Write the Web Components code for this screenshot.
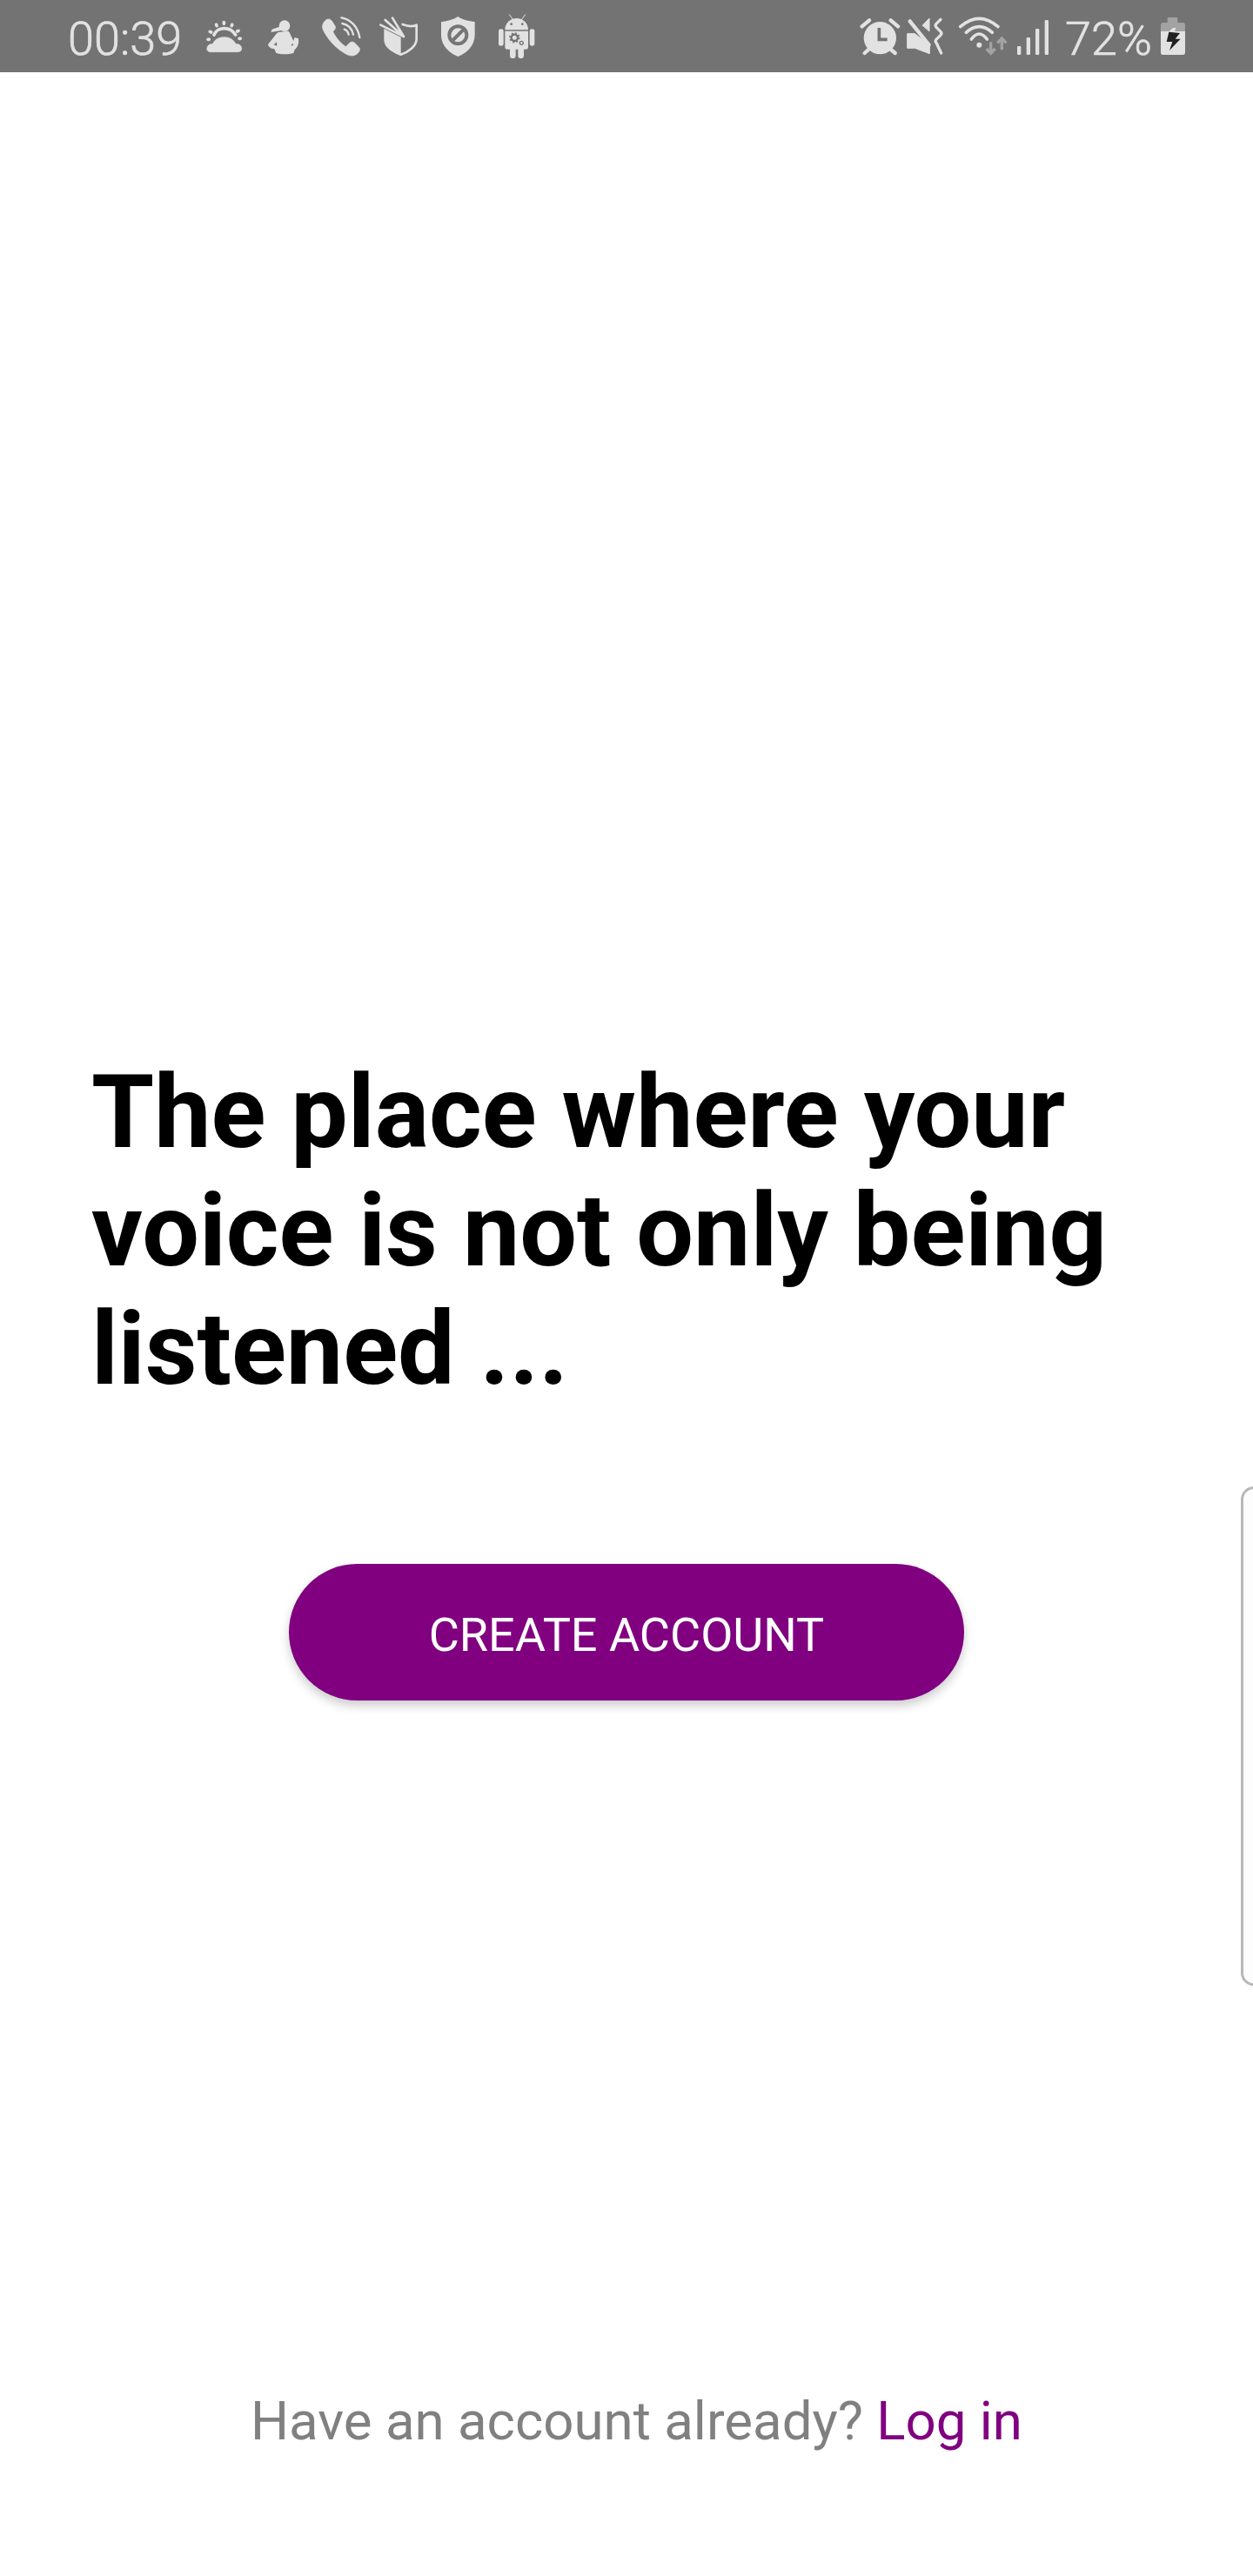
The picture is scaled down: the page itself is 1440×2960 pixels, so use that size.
<!DOCTYPE html>
<html><head><meta charset="utf-8"><title>Sign up</title>
<style>html,body{margin:0;background:#fff;height:100%}body{font-family:Roboto,sans-serif}</style></head>
<body>
<app-screen>
  <status-bar slot="status"></status-bar>
  <hero-title slot="title">The place where your voice is not only being listened ...</hero-title>
  <pill-button slot="action">CREATE ACCOUNT</pill-button>
  <login-prompt slot="footer"></login-prompt>
  <edge-handle slot="overlay"></edge-handle>
</app-screen>
<script>
const make=(name,html)=>customElements.define(name,class extends HTMLElement{
  constructor(){super();this.attachShadow({mode:'open'}).innerHTML=html;}
});
make('app-screen',`<style>
:host{display:flex;flex-direction:column;position:relative;width:1440px;height:2960px;overflow:hidden;background:#fff}
.title{padding:1127px 90px 0 105px}
.action{display:flex;justify-content:center;padding:179px 0 0 0}
.footer{margin-top:auto;padding:0 0 138px 23px}
</style>
<slot name="status"></slot>
<div class="title"><slot name="title"></slot></div>
<div class="action"><slot name="action"></slot></div>
<div class="footer"><slot name="footer"></slot></div>
<slot name="overlay"></slot>`);
const L='#e2e2e2',B='#737373',G='#a3a3a3';
const I=(x,y,w,h,body)=>`<svg style="left:${x}px;top:${y}px;width:${w}px;height:${h}px" viewBox="0 0 ${w*3} ${h*3}" fill="${L}" stroke-linecap="round" stroke-linejoin="round">${body}</svg>`;
make('status-bar',`<style>
:host{display:block;position:relative;height:83px;background:${B};color:${L};font-family:Roboto,sans-serif;font-weight:300;font-size:54px;flex:none;-webkit-text-stroke:.7px ${L}}
span{position:absolute;top:15px;line-height:59px}
svg{position:absolute;overflow:visible}
</style>
<span style="left:78px">00:39</span>
<span style="left:1224px">72%</span>
${I(237,24,42,36,`<path d="M14 107C4 107 0 98 4 90 7 82 14 79 22 80 28 64 44 56 62 56 82 56 96 66 102 80 112 78 122 85 122 96 122 104 116 107 108 107Z" stroke="${L}" stroke-width="2"/><path d="M27 48C34 32 48 26 62 26 78 26 92 34 101 48" fill="none" stroke="${L}" stroke-width="11"/><path d="M35 13l1 4M61 5v5M89 13l-1 4M13 37l4 2M111 34l-4 2M6 64h4M118 61h-4" fill="none" stroke="${L}" stroke-width="11"/>`)}
${I(308,23,35,39,`<circle cx="57" cy="20" r="19"/><path d="M48 20L14 32 10 42 46 36Z"/><path fill-rule="evenodd" d="M36 42L70 38C76 44 78 52 82 60L88 72 92 60 105 64C107 84 102 94 92 102L88 114C70 119 45 119 28 114L22 100C10 98 1 93 0 84L22 56C26 50 30 45 36 42ZM30 76L20 85 31 89ZM83 80L80 90 88 86Z"/>`)}
${I(370,19,44,46,`<path d="M14 12C22 6 30 8 36 18L46 34C48 40 44 46 38 52 46 70 62 90 82 104L94 92C100 86 106 86 112 90L126 104C134 112 130 120 122 128 112 136 100 138 84 130 50 112 20 80 4 46-2 32 4 20 14 12Z" stroke="${L}" stroke-width="2"/><path d="M67 4C100 10 124 36 130 72M70 24C90 28 104 42 108 62M77 44C85 47 90 53 92 62" fill="none" stroke="${L}" stroke-width="7"/>`)}
${I(436,18,44,45,`<path d="M80 30C95 36 115 38 128 32V80C128 105 100 125 74 134 50 125 22 110 20 85V45" fill="none" stroke="${L}" stroke-width="8"/><path d="M20 45L74 70V134C50 125 22 110 20 85Z"/><path d="M4 32L84 72M20 15L84 72M45 8L84 72" fill="none" stroke="${B}" stroke-width="13"/><path d="M4 32L84 72M20 15L84 72M45 8L84 72" fill="none" stroke="${L}" stroke-width="8"/>`)}
${I(507,19,39,46,`<path d="M58 0C75 12 95 16 116 18V62C116 100 90 125 58 138 26 125 0 100 0 62V18C20 16 40 12 58 0Z"/><circle cx="58" cy="64" r="30" fill="none" stroke="#767676" stroke-width="12"/><path d="M38 84L78 44" stroke="#767676" stroke-width="12"/>`)}
${I(573,16,41,51,`<path d="M22 55C22 32 40 15 62 15 84 15 102 32 102 55Z"/><path d="M37 2L50 20M92 2L79 20" stroke="${L}" stroke-width="3" fill="none"/><circle cx="44" cy="35" r="4" fill="${B}"/><circle cx="82" cy="35" r="4" fill="${B}"/><rect x="0" y="52" width="17" height="58" rx="8"/><rect x="107" y="52" width="17" height="58" rx="8"/><rect x="39" y="100" width="20" height="53" rx="10"/><rect x="67" y="100" width="20" height="53" rx="10"/><path d="M22 59H102V114A8 8 0 0 1 94 122H30A8 8 0 0 1 22 114Z"/><circle cx="55" cy="82" r="11" fill="none" stroke="${B}" stroke-width="7"/><circle cx="55" cy="82" r="16" fill="none" stroke="${B}" stroke-width="5" stroke-dasharray="6 6.500" stroke-linecap="butt"/><circle cx="79" cy="100" r="6" fill="none" stroke="${B}" stroke-width="4"/>`)}
${I(989,21,44,42,`<circle cx="67" cy="68" r="56"/><path d="M5 28L30 7M104 7L129 28M14 120L27 108M119 120L105 108" fill="none" stroke="${L}" stroke-width="13"/><path d="M64 33V73H92" fill="none" stroke="${B}" stroke-width="11" stroke-linecap="butt" stroke-linejoin="miter"/>`)}
${I(1043,21,42,42,`<path d="M0 53H25L76 93V122L25 103H0Z" stroke="${L}" stroke-width="3"/><path d="M8 10L74 92" stroke="${L}" stroke-width="13"/><path d="M52 24L75 0V44Z" stroke="${L}" stroke-width="3"/><path d="M114 4L98 20Q94 26 100 32L114 46Q120 52 114 58L98 74Q94 80 100 86L116 120" fill="none" stroke="${L}" stroke-width="10"/>`)}
${I(1102,20,56,43,`<path d="M5 32Q70-24 135 32M25 52Q70 12 115 52M43 75Q70 39 97 75" fill="none" stroke="${L}" stroke-width="11"/><circle cx="70" cy="95" r="9"/><path d="M110 85V122M95 108L110 124 125 108M148 112V72M133 88L148 72 163 88" fill="none" stroke="${G}" stroke-width="10" stroke-linecap="butt" stroke-linejoin="miter"/>`)}
${I(1169,23,36,40,`<rect x="0" y="90" width="13" height="30" rx="4"/><rect x="32" y="60" width="13" height="60" rx="4"/><rect x="63" y="30" width="13" height="90" rx="4"/><rect x="95" y="0" width="13" height="120" rx="4"/>`)}
${I(1334,20,28,43,`<path d="M23 4A4 4 0 0 1 27 0H54A4 4 0 0 1 58 4V18H76A8 8 0 0 1 84 26V48H0V26A8 8 0 0 1 8 18H23Z" fill="${G}"/><path d="M0 48H84V121A8 8 0 0 1 76 129H8A8 8 0 0 1 0 121Z"/><path d="M42 36H52L48 50H26Z" fill="${L}"/><path d="M28 50L66 54 50 74H68L30 114 40 84H20Z" fill="#222"/>`)}
`);
make('hero-title',`<style>:host{display:block;font:700 116.500px/136px Roboto,sans-serif;color:#000}</style><slot></slot>`);
make('pill-button',`<style>:host{display:flex;align-items:center;justify-content:center;box-sizing:border-box;width:776px;height:157px;padding-top:5px;border-radius:78.500px;background:#800080;color:#fff;font:400 54px Roboto,sans-serif;box-shadow:0 6px 12px rgba(0,0,0,.2)}</style><slot></slot>`);
make('login-prompt',`<style>:host{display:block;text-align:center;font:400 61.800px/80px Roboto,sans-serif;color:#808080}a{color:#800080;text-decoration:none}</style>Have an account already? <a href="#">Log in</a>`);
make('edge-handle',`<style>:host{position:absolute;left:1426px;top:1708px;width:30px;height:574px;box-sizing:border-box;border:3px solid #b8b8b8;border-radius:18px;background:#fdfdfd}</style>`);
</script>
</body></html>
